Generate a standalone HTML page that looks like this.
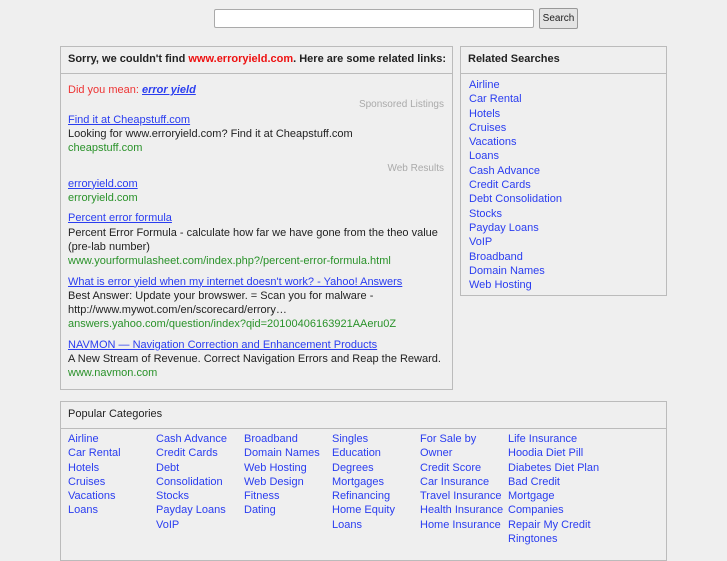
<!DOCTYPE html>
<html><head><style>
body{margin:0;background:#efefef;font-family:"Liberation Sans",Arial,sans-serif;font-size:11px;color:#222;width:727px;height:545px;overflow:hidden;position:relative}
a{color:#2a3df0}
.box{position:absolute;border:1px solid #bbb;box-sizing:border-box}
.hd{height:26px;border-bottom:1px solid #bbb;padding:0 7px;line-height:25px;font-weight:bold;font-size:11px;white-space:nowrap}
.l{line-height:14.3px}
.g{color:#2a922a}
.r{text-align:right;color:#aaa}
.cols a{text-decoration:none;display:block;white-space:nowrap}
.col{position:absolute;top:30px;width:88px;line-height:14.3px}
</style></head><body>
<div style="position:absolute;left:214px;top:9px;width:320px;height:19px;background:#fff;border:1px solid #aaa;box-sizing:border-box;border-radius:2px"></div>
<div style="position:absolute;left:539px;top:8px;width:39px;height:21px;background:#e4e4e4;border:1px solid #999;box-sizing:border-box;border-radius:2px;text-align:center;line-height:19px;font-size:10px">Search</div>

<div class="box" style="left:60px;top:46px;width:393px;height:344px">
<div class="hd">Sorry, we couldn't find <span style="color:#e11">www.erroryield.com</span>. Here are some related links:</div>
<div style="padding:9px 8px 0 7px" class="l">
<div style="color:#e33">Did you mean: <a href="#" style="font-weight:bold;font-style:italic">error yield</a></div>
<div class="r" style="margin-top:1px;font-size:10px">Sponsored Listings</div>
<div><a href="#">Find it at Cheapstuff.com</a></div>
<div>Looking for www.erroryield.com? Find it at Cheapstuff.com</div>
<div class="g">cheapstuff.com</div>
<div class="r" style="margin-top:7px;font-size:10px">Web Results</div>
<div><a href="#">erroryield.com</a></div>
<div class="g">erroryield.com</div>
<div style="margin-top:6px"><a href="#">Percent error formula</a></div>
<div>Percent Error Formula - calculate how far we have gone from the theo value (pre-lab number)</div>
<div class="g">www.yourformulasheet.com/index.php?/percent-error-formula.html</div>
<div style="margin-top:6px"><a href="#">What is error yield when my internet doesn't work? - Yahoo! Answers</a></div>
<div>Best Answer: Update your browswer. = Scan you for malware - http://www.mywot.com/en/scorecard/errory…</div>
<div class="g">answers.yahoo.com/question/index?qid=20100406163921AAeru0Z</div>
<div style="margin-top:6px"><a href="#">NAVMON — Navigation Correction and Enhancement Products</a></div>
<div>A New Stream of Revenue. Correct Navigation Errors and Reap the Reward.</div>
<div class="g">www.navmon.com</div>
</div></div>

<div class="box cols" style="left:460px;top:46px;width:207px;height:250px">
<div class="hd">Related Searches</div>
<div style="padding:4px 8px" class="l">
<a href="#">Airline</a><a href="#">Car Rental</a><a href="#">Hotels</a><a href="#">Cruises</a><a href="#">Vacations</a><a href="#">Loans</a><a href="#">Cash Advance</a><a href="#">Credit Cards</a><a href="#">Debt Consolidation</a><a href="#">Stocks</a><a href="#">Payday Loans</a><a href="#">VoIP</a><a href="#">Broadband</a><a href="#">Domain Names</a><a href="#">Web Hosting</a>
</div></div>

<div class="box cols" style="left:60px;top:401px;width:607px;height:160px">
<div class="hd" style="font-weight:normal">Popular Categories</div>
<div class="col" style="left:7px"><a href="#">Airline</a><a href="#">Car Rental</a><a href="#">Hotels</a><a href="#">Cruises</a><a href="#">Vacations</a><a href="#">Loans</a></div>
<div class="col" style="left:95px"><a href="#">Cash Advance</a><a href="#">Credit Cards</a><a href="#">Debt</a><a href="#">Consolidation</a><a href="#">Stocks</a><a href="#">Payday Loans</a><a href="#">VoIP</a></div>
<div class="col" style="left:183px"><a href="#">Broadband</a><a href="#">Domain Names</a><a href="#">Web Hosting</a><a href="#">Web Design</a><a href="#">Fitness</a><a href="#">Dating</a></div>
<div class="col" style="left:271px"><a href="#">Singles</a><a href="#">Education</a><a href="#">Degrees</a><a href="#">Mortgages</a><a href="#">Refinancing</a><a href="#">Home Equity</a><a href="#">Loans</a></div>
<div class="col" style="left:359px"><a href="#">For Sale by</a><a href="#">Owner</a><a href="#">Credit Score</a><a href="#">Car Insurance</a><a href="#">Travel Insurance</a><a href="#">Health Insurance</a><a href="#">Home Insurance</a></div>
<div class="col" style="left:447px;width:100px"><a href="#">Life Insurance</a><a href="#">Hoodia Diet Pill</a><a href="#">Diabetes Diet Plan</a><a href="#">Bad Credit</a><a href="#">Mortgage</a><a href="#">Companies</a><a href="#">Repair My Credit</a><a href="#">Ringtones</a></div>
</div>
</body></html>
